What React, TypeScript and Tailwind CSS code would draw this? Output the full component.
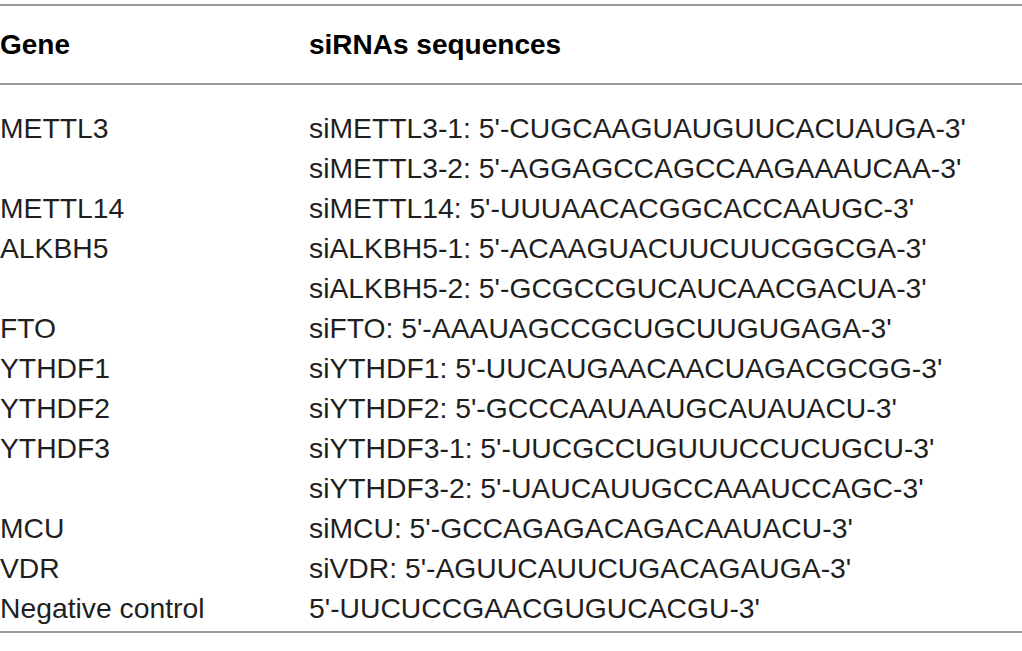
const ROWS: Array<{ gene: string; seqs: string[] }> = [
  { gene: 'METTL3', seqs: ["siMETTL3-1: 5'-CUGCAAGUAUGUUCACUAUGA-3'", "siMETTL3-2: 5'-AGGAGCCAGCCAAGAAAUCAA-3'"] },
  { gene: 'METTL14', seqs: ["siMETTL14: 5'-UUUAACACGGCACCAAUGC-3'"] },
  { gene: 'ALKBH5', seqs: ["siALKBH5-1: 5'-ACAAGUACUUCUUCGGCGA-3'", "siALKBH5-2: 5'-GCGCCGUCAUCAACGACUA-3'"] },
  { gene: 'FTO', seqs: ["siFTO: 5'-AAAUAGCCGCUGCUUGUGAGA-3'"] },
  { gene: 'YTHDF1', seqs: ["siYTHDF1: 5'-UUCAUGAACAACUAGACGCGG-3'"] },
  { gene: 'YTHDF2', seqs: ["siYTHDF2: 5'-GCCCAAUAAUGCAUAUACU-3'"] },
  { gene: 'YTHDF3', seqs: ["siYTHDF3-1: 5'-UUCGCCUGUUUCCUCUGCU-3'", "siYTHDF3-2: 5'-UAUCAUUGCCAAAUCCAGC-3'"] },
  { gene: 'MCU', seqs: ["siMCU: 5'-GCCAGAGACAGACAAUACU-3'"] },
  { gene: 'VDR', seqs: ["siVDR: 5'-AGUUCAUUCUGACAGAUGA-3'"] },
  { gene: 'Negative control', seqs: ["5'-UUCUCCGAACGUGUCACGU-3'"] },
]

export default function App() {
  return (
    <div className="w-[1022px] h-[651px] bg-white pt-[4px] font-['Liberation_Sans',Arial,sans-serif]">
      <div className="h-[2px] bg-[#9a9a9a]" />
      <div className="grid grid-cols-[309px_1fr] h-[77px] items-center text-[28px] font-bold text-black">
        <div>Gene</div>
        <div>siRNAs sequences</div>
      </div>
      <div className="h-[2px] bg-[#9a9a9a]" />
      <div className="pt-[23px] pb-[3px] text-[28.3px] leading-[40px] text-[#1f1f1f]">
        {ROWS.map(r => (
          <div key={r.gene} className="grid grid-cols-[309px_1fr]">
            <div>{r.gene}</div>
            <div className="flex flex-col">
              {r.seqs.map(s => <div key={s}>{s}</div>)}
            </div>
          </div>
        ))}
      </div>
      <div className="h-[2px] bg-[#9a9a9a]" />
    </div>
  )
}
